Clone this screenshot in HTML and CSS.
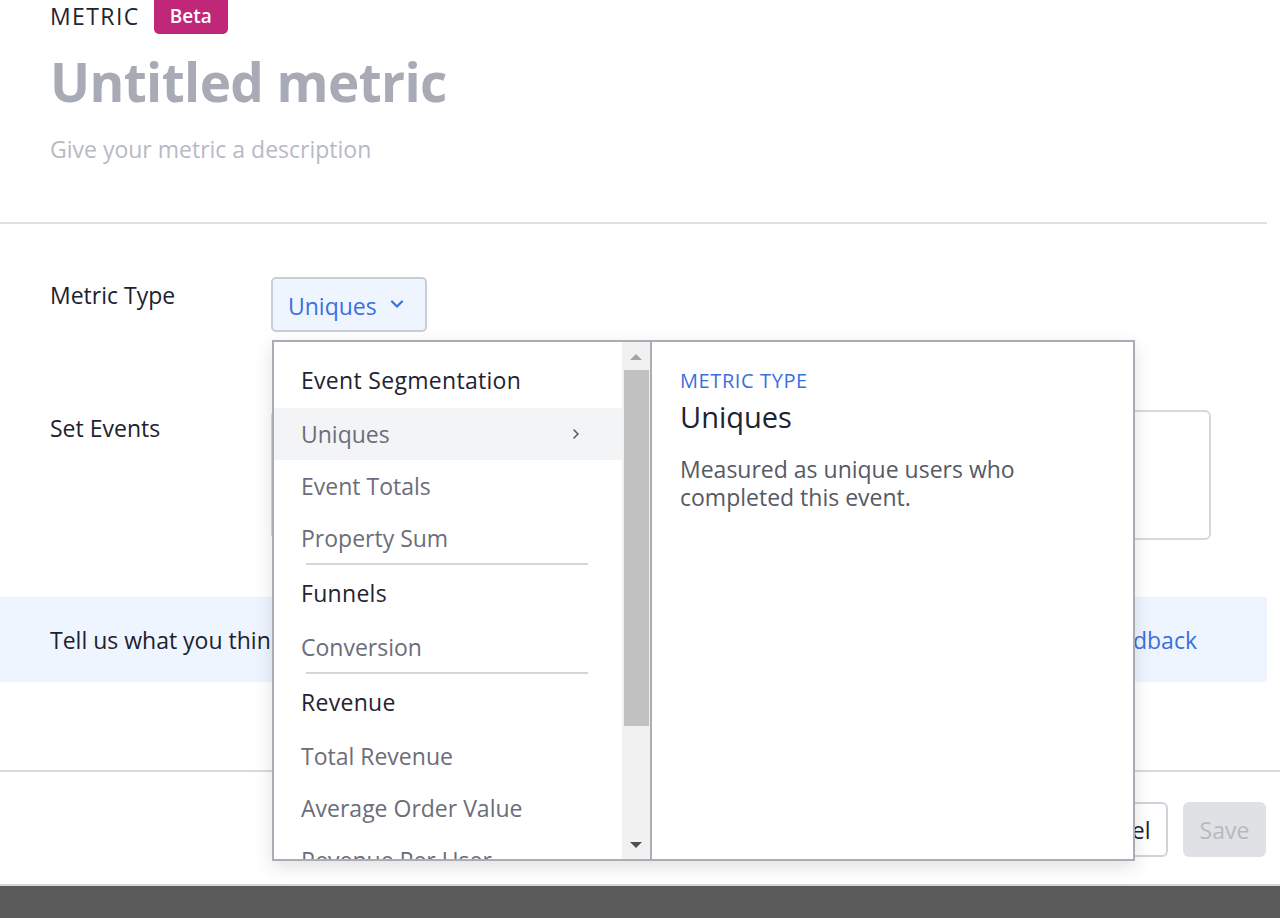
FILE: index.html
```html
<!DOCTYPE html>
<html>
<head>
<meta charset="utf-8">
<link rel="stylesheet" href="styles.css">
</head>
<body>
<div class="app">
  <header class="head">
    <div class="eyebrow"><span class="kicker">METRIC</span><span class="badge">Beta</span></div>
    <h1 class="title">Untitled metric</h1>
    <p class="desc">Give your metric a description</p>
  </header>
  <div class="rule"></div>
  <section class="form">
    <div class="row row-type">
      <div class="label">Metric Type</div>
      <div class="field">
        <div class="select-wrap">
          <button class="select">Uniques
            <svg class="chev" width="16" height="14" viewBox="0 0 16 14"><path d="M3 4.5 8 9.5l5-5" fill="none" stroke="#3b6fe0" stroke-width="2.2" stroke-linecap="round" stroke-linejoin="round"/></svg>
          </button>
          <div class="popover">
            <div class="list">
              <div class="items">
                <div class="group">Event Segmentation</div>
                <div class="item active"><span>Uniques</span>
                  <svg width="12" height="14" viewBox="0 0 12 14"><path d="M4 3l4 4-4 4" fill="none" stroke="#555a66" stroke-width="1.6" stroke-linecap="round" stroke-linejoin="round"/></svg>
                </div>
                <div class="item">Event Totals</div>
                <div class="item">Property Sum</div>
                <div class="sep"></div>
                <div class="group">Funnels</div>
                <div class="item">Conversion</div>
                <div class="sep"></div>
                <div class="group">Revenue</div>
                <div class="item">Total Revenue</div>
                <div class="item">Average Order Value</div>
                <div class="item">Revenue Per User</div>
              </div>
              <div class="scrollbar">
                <div class="arrow up"></div>
                <div class="thumb"></div>
                <div class="arrow down"></div>
              </div>
            </div>
            <div class="detail">
              <div class="d-kicker">METRIC TYPE</div>
              <div class="d-title">Uniques</div>
              <p class="d-text">Measured as unique users who completed this event.</p>
            </div>
          </div>
        </div>
      </div>
    </div>
    <div class="row row-events">
      <div class="label">Set Events</div>
      <div class="field"><div class="events-box"></div></div>
    </div>
  </section>
  <div class="banner">
    <span class="banner-text">Tell us what you think about metrics</span>
    <a class="banner-link">Give feedback</a>
  </div>
  <footer class="foot">
    <button class="btn btn-cancel">Cancel</button>
    <button class="btn btn-save">Save</button>
  </footer>
</div>
<div class="bottombar"></div>
</body>
</html>
```

FILE: styles.css
```css
* { box-sizing: border-box; }
html, body { margin: 0; padding: 0; }
body {
  font-family: "Open Sans", "Noto Sans", "Liberation Sans", sans-serif;
  background: #ffffff;
  color: #1d2230;
  width: 1280px;
  height: 918px;
  overflow: hidden;
  display: flex;
  flex-direction: column;
}
.app { flex: 1; display: flex; flex-direction: column; }

.head { padding: 0 0 0 50px; margin-top: -4px; height: 226px; }
.eyebrow { display: flex; align-items: center; gap: 14px; height: 38px; }
.kicker { font-size: 23px; letter-spacing: 1.4px; color: #1f2533; margin-top: 2px; }
.badge {
  background: #c02779; color: #fff; font-weight: 600; font-size: 19px;
  padding: 0 16px; height: 38px; line-height: 40px; border-radius: 5px;
}
.title { margin: 16px 0 0; font-size: 53px; line-height: 64px; font-weight: 700; color: #a8aab5; letter-spacing: -0.6px; }
.desc { margin: 20px 0 0; font-size: 23px; line-height: 30px; color: #b7bac4; letter-spacing: 0; }

.rule { width: 1267px; height: 2px; background: #e0e1e5; }

.form { padding: 53px 0 0 50px; height: 373px; }
.row { display: flex; }
.label { width: 221px; font-size: 23px; color: #1d2230; }
.row-type .label { padding-top: 2px; }
.row-events { margin-top: 78px; }
.row-events .label { padding-top: 2px; }
.field { flex: 1; }

.select-wrap { position: relative; display: inline-block; }
.select {
  display: flex; align-items: center; gap: 12px;
  height: 55px; width: 156px; padding: 3px 0 0 15px;
  background: #eef5ff; border: 2px solid #c9cdd6; border-radius: 5px;
  font-family: inherit; font-size: 23px; color: #3b6fe0;
}
.chev { margin-top: -4px; }

.events-box { width: 940px; height: 130px; border: 2px solid #d5d8de; border-radius: 6px; }

.popover {
  position: absolute; left: 1px; top: 63px; z-index: 10;
  width: 863px; height: 521px;
  display: flex; background: #fff;
  border: 2px solid #a9adb6;
  box-shadow: 0 6px 18px rgba(0,0,0,0.12);
}
.list { width: 378px; display: flex; border-right: 2px solid #a9adb6; overflow: hidden; }
.items { flex: 1; padding-top: 23px; overflow: hidden; }
.group { height: 43px; padding-left: 27px; font-size: 23px; font-weight: 500; color: #1f2430; line-height: 30px; letter-spacing: 0.3px; }
.item {
  height: 52px; padding: 0 40px 0 27px; display: flex; align-items: center; justify-content: space-between;
  font-size: 23px; color: #6b6e78; white-space: nowrap;
}
.item.active { background: #f3f4f6; }
.sep { height: 2px; background: #d3d5da; margin: -1px 34px 13px 32px; }
.scrollbar { width: 28px; background: #f1f1f1; display: flex; flex-direction: column; align-items: center; }
.arrow { width: 0; height: 0; border-left: 6px solid transparent; border-right: 6px solid transparent; }
.arrow.up { border-bottom: 6px solid #a3a3a3; margin: 12px 0 10px; }
.arrow.down { border-top: 6px solid #505050; margin-top: auto; margin-bottom: 11px; }
.thumb { width: 25px; height: 356px; background: #c1c1c1; }

.detail { flex: 1; padding: 25px 28px; }
.d-kicker { font-size: 20px; color: #3b6fe0; letter-spacing: 0.6px; line-height: 28px; }
.d-title { font-size: 29px; color: #1d2230; margin-top: 2px; line-height: 40px; }
.d-text { margin: 18px 0 0; width: 380px; font-size: 23px; line-height: 28px; color: #555a66; letter-spacing: 0; }

.banner {
  width: 1267px; height: 85px; background: #eef5ff;
  display: flex; align-items: center; justify-content: space-between;
  padding: 0 70px 0 50px; font-size: 23px;
}
.banner-text { color: #1d2230; }
.banner-link { color: #3b6fe0; }

.foot {
  margin-top: 88px; border-top: 2px solid #d9dadf;
  display: flex; justify-content: flex-end; gap: 15px;
  padding: 30px 14px 0 0; height: 113px;
}
.btn { height: 55px; border-radius: 6px; font-family: inherit; font-size: 23px; }
.btn-cancel { width: 106px; background: #fff; border: 2px solid #d0d3d9; color: #1d2230; }
.btn-save { width: 83px; background: #e0e1e5; border: none; color: #b7b9bf; }

.bottombar { height: 34px; background: #5b5b5b; border-top: 2px solid #d5d5d5; }
```
